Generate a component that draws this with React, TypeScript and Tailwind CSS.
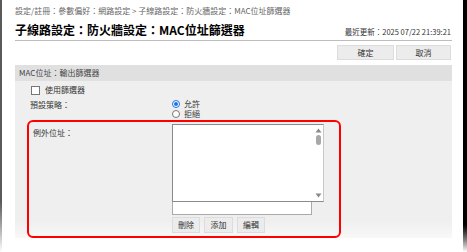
const FONT = "font-['Noto_Sans_CJK_TC','Noto_Sans',sans-serif]";

function SmallButton({ label, className }: { label: string; className: string }) {
  return (
    <button
      className={`flex items-center justify-center border border-[#dcdcdc] bg-[#ececec] text-[8px] leading-none text-[#333] ${className}`}
    >
      {label}
    </button>
  );
}

function ScrollArrow({ up }: { up?: boolean }) {
  return (
    <svg width="7" height="5" viewBox="0 0 7 5" className="mx-auto">
      <path d={up ? "M3.5 0.5 L6.5 4.5 L0.5 4.5 Z" : "M0.5 0.5 L6.5 0.5 L3.5 4.5 Z"} fill="#8a8a8a" />
    </svg>
  );
}

export default function App() {
  return (
    <div className={`flex h-[252px] w-[467px] overflow-hidden bg-white ${FONT}`}>
      {/* left frame edge */}
      <div className="w-[2px] shrink-0 bg-gradient-to-b from-[#5a5a5a] from-80% to-white" />

      <div className="flex min-w-0 flex-1 flex-col pl-[13px] pr-[11px] pt-[5px]">
        {/* breadcrumb */}
        <div className="text-[8px] leading-[11px] whitespace-nowrap text-[#666]">
          設定/註冊：參數偏好：網路設定 &gt; 子線路設定：防火牆設定：MAC位址篩選器
        </div>

        {/* title row */}
        <div className="mt-[6px] flex items-end justify-between border-b border-[#bdbdbd] pb-[3px]">
          <h1 className="text-[12px] leading-[15px] font-bold whitespace-nowrap text-black">
            子線路設定：防火牆設定：MAC位址篩選器
          </h1>
          <span className="pr-[1px] text-[7.5px] leading-[10px] whitespace-nowrap text-[#333]">
            最近更新：2025 07/22 21:39:21
          </span>
        </div>

        {/* action buttons */}
        <div className="mt-[4px] flex justify-end gap-[2px] pr-[1px]">
          <SmallButton label="確定" className="h-[15px] w-[57px]" />
          <SmallButton label="取消" className="h-[15px] w-[55px]" />
        </div>

        {/* section */}
        <div className="mt-[5px] flex flex-col bg-gradient-to-b from-[#efefef] from-90% to-[#f8f8f8]">
          <div className="flex h-[16px] items-center bg-[#e0e0e0] pl-[4px] text-[8px] text-[#444]">
            MAC位址：輸出篩選器
          </div>

          <div className="flex flex-col pl-[12px]">
            {/* use filter */}
            <div className="mt-[4px] flex items-center gap-[5px] pl-[4px]">
              <span className="h-[9px] w-[9px] border border-[#777] bg-white" />
              <span className="text-[8px] leading-[10px] text-[#333]">使用篩選器</span>
            </div>

            {/* default policy */}
            <div className="mt-[4px] flex">
              <span className="w-[145px] shrink-0 pl-[3px] pt-[1px] text-[8px] leading-[10px] text-[#333]">
                預設策略：
              </span>
              <div className="flex flex-col">
                <label className="flex h-[10px] items-center gap-[4px] text-[8px] text-[#333]">
                  <span className="flex h-[8px] w-[8px] items-center justify-center rounded-full border border-[#1a73e8] bg-white">
                    <span className="h-[4px] w-[4px] rounded-full bg-[#1a73e8]" />
                  </span>
                  允許
                </label>
                <label className="flex h-[10px] items-center gap-[4px] text-[8px] text-[#333]">
                  <span className="h-[8px] w-[8px] rounded-full border border-[#777] bg-white" />
                  拒絕
                </label>
              </div>
            </div>

            {/* exception addresses - highlighted */}
            <div className="mt-[1px] flex h-[118px] w-[314px] rounded-[6px] border-2 border-[#ff0000] pt-[2px]">
              <span className="w-[143px] shrink-0 pl-[4px] pt-[4px] text-[8px] leading-[10px] text-[#333]">
                例外位址：
              </span>
              <div className="flex flex-col">
                <div className="flex h-[78px] w-[152px] border border-[#8a8a8a] border-r-[#c8c8c8] border-b-[#8a8a8a] bg-white">
                  <div className="flex-1" />
                  <div className="flex w-[9px] flex-col py-[3px]">
                    <ScrollArrow up />
                    <span className="mx-auto mt-[2px] h-[10px] w-[5px] rounded-full bg-[#a8a8a8]" />
                    <div className="flex-1" />
                    <ScrollArrow />
                  </div>
                </div>
                <div className="h-[13px] w-[140px] border border-[#aaa] border-t-0 bg-white" />
                <div className="mt-[2px] flex gap-[4px]">
                  <SmallButton label="刪除" className="h-[16px] w-[28px]" />
                  <SmallButton label="添加" className="h-[16px] w-[29px]" />
                  <SmallButton label="編輯" className="h-[16px] w-[28px]" />
                </div>
              </div>
            </div>
          </div>
        </div>
      </div>

      {/* right frame edge */}
      <div className="w-[4px] shrink-0 bg-gradient-to-b from-black from-88% to-white" />
    </div>
  );
}
